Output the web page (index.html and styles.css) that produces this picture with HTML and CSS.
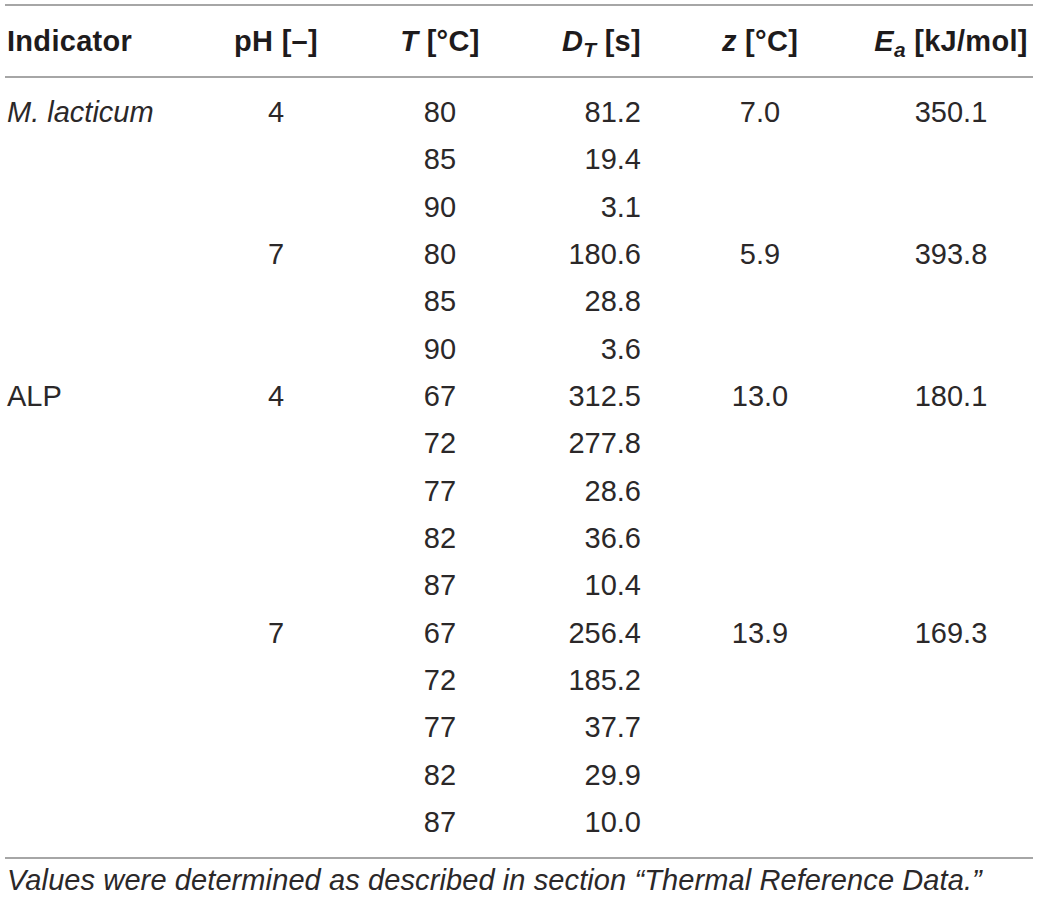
FILE: index.html
```html
<!DOCTYPE html>
<html lang="en">
<head>
    <meta charset="UTF-8">
    <meta name="viewport" content="width=device-width, initial-scale=1.0">
    <title>Thermal inactivation kinetics</title>
    <link rel="stylesheet" href="styles.css">
</head>
<body>
    <div class="wrapper">
        <table class="data">
            <colgroup>
                <col class="c-ind">
                <col class="c-ph">
                <col class="c-t">
                <col class="c-dt">
                <col class="c-z">
                <col class="c-ea">
            </colgroup>
            <thead>
                <tr>
                    <th class="left">Indicator</th>
                    <th>pH [–]</th>
                    <th><i>T</i> [°C]</th>
                    <th class="right"><i>D<sub>T</sub></i> [s]</th>
                    <th><i>z</i> [°C]</th>
                    <th><i>E<sub>a</sub></i> [kJ/mol]</th>
                </tr>
            </thead>
            <tbody>
                <tr><td class="left"><i>M. lacticum</i></td><td>4</td><td>80</td><td class="right">81.2</td><td>7.0</td><td>350.1</td></tr>
                <tr><td></td><td></td><td>85</td><td class="right">19.4</td><td></td><td></td></tr>
                <tr><td></td><td></td><td>90</td><td class="right">3.1</td><td></td><td></td></tr>
                <tr><td></td><td>7</td><td>80</td><td class="right">180.6</td><td>5.9</td><td>393.8</td></tr>
                <tr><td></td><td></td><td>85</td><td class="right">28.8</td><td></td><td></td></tr>
                <tr><td></td><td></td><td>90</td><td class="right">3.6</td><td></td><td></td></tr>
                <tr><td class="left">ALP</td><td>4</td><td>67</td><td class="right">312.5</td><td>13.0</td><td>180.1</td></tr>
                <tr><td></td><td></td><td>72</td><td class="right">277.8</td><td></td><td></td></tr>
                <tr><td></td><td></td><td>77</td><td class="right">28.6</td><td></td><td></td></tr>
                <tr><td></td><td></td><td>82</td><td class="right">36.6</td><td></td><td></td></tr>
                <tr><td></td><td></td><td>87</td><td class="right">10.4</td><td></td><td></td></tr>
                <tr><td></td><td>7</td><td>67</td><td class="right">256.4</td><td>13.9</td><td>169.3</td></tr>
                <tr><td></td><td></td><td>72</td><td class="right">185.2</td><td></td><td></td></tr>
                <tr><td></td><td></td><td>77</td><td class="right">37.7</td><td></td><td></td></tr>
                <tr><td></td><td></td><td>82</td><td class="right">29.9</td><td></td><td></td></tr>
                <tr><td></td><td></td><td>87</td><td class="right">10.0</td><td></td><td></td></tr>
            </tbody>
        </table>
        <p class="note">Values were determined as described in section “Thermal Reference Data.”</p>
    </div>
</body>
</html>
```

FILE: styles.css
```css
* {
    padding: 0;
    margin: 0;
}
body {
    background-color: #fff;
    color: #2b2829;
    font-family: "Liberation Sans", Arial, sans-serif;
}
.wrapper {
    width: 1028px;
    margin: 4px 0 0 5px;
}
.data {
    width: 1028px;
    border-collapse: collapse;
    table-layout: fixed;
    font-size: 29px;
}
.c-ind { width: 215px; }
.c-ph { width: 112px; }
.c-t { width: 216px; }
.c-dt { width: 103px; }
.c-z { width: 218px; }
.c-ea { width: 164px; }

.data th,
.data td {
    text-align: center;
    white-space: nowrap;
    padding: 0;
}
.data .left {
    text-align: left;
    padding-left: 2px;
}
.data .right {
    text-align: right;
    padding-right: 10px;
}
.data thead tr {
    border-top: 2px solid #a6a6a6;
    border-bottom: 2px solid #a6a6a6;
}
.data th {
    height: 70px;
    font-weight: bold;
    color: #1e1b1c;
    letter-spacing: 0.3px;
}
.data sub {
    font-size: 0.72em;
    vertical-align: -0.3em;
    line-height: 0;
}
.data td {
    height: 47.33px;
    line-height: 47.33px;
    font-weight: normal;
}
.data tbody tr:first-child td {
    padding-top: 11px;
}
.data tbody tr:last-child td {
    padding-bottom: 11px;
}
.data tbody tr:last-child {
    border-bottom: 2px solid #a6a6a6;
}
.note {
    font-size: 29px;
    font-style: italic;
    line-height: 40px;
    padding-left: 2px;
    margin-top: 1px;
    letter-spacing: 0.1px;
}
```
